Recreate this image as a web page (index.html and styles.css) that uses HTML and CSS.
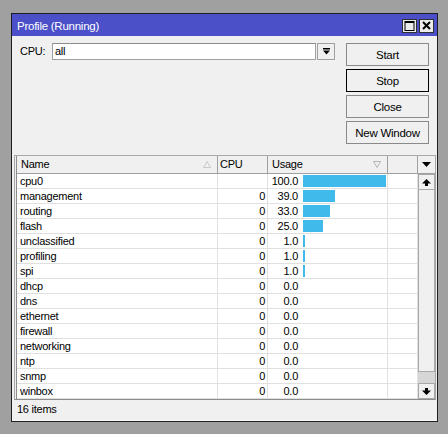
FILE: index.html
```html
<!DOCTYPE html>
<html>
<head>
<meta charset="utf-8">
<link rel="stylesheet" href="styles.css">
</head>
<body>
<div class="window">
  <div class="titlebar">
    <span class="title">Profile (Running)</span>
    <div class="tbtns">
      <span class="tbtn"><svg width="13" height="12" viewBox="0 0 13 12"><rect x="2" y="1.5" width="9" height="9" fill="none" stroke="#000" stroke-width="1"/><rect x="2" y="1" width="9" height="2" fill="#000"/></svg></span>
      <span class="tbtn"><svg width="13" height="12" viewBox="0 0 13 12"><path d="M3 2 L10 9 M10 2 L3 9" stroke="#000" stroke-width="2"/></svg></span>
    </div>
  </div>
  <div class="content">
    <div class="top">
      <div class="cpu">
        <span class="lbl">CPU:</span>
        <div class="input">all</div>
        <div class="dd"><svg width="9" height="9" viewBox="0 0 9 9"><rect x="1" y="1" width="7" height="1.5" fill="#000"/><polygon points="1,3.5 8,3.5 4.5,7.5" fill="#000"/></svg></div>
      </div>
      <div class="btns">
        <div class="btn">Start</div>
        <div class="btn def">Stop</div>
        <div class="btn">Close</div>
        <div class="btn">New Window</div>
      </div>
    </div>
    <div class="grid">
      <div class="inner">
        <div class="main">
          <div class="row hdr">
            <div class="c name">Name<svg class="sort" width="8" height="7" viewBox="0 0 8 7"><polygon points="4,0.5 7.5,6.5 0.5,6.5" fill="none" stroke="#c8c8c8"/></svg></div>
            <div class="c cpuc">CPU</div>
            <div class="c usage">Usage<svg class="sort" width="8" height="7" viewBox="0 0 8 7"><polygon points="0.5,0.5 7.5,0.5 4,6.5" fill="none" stroke="#b4b4b4"/></svg></div>
            <div class="c blank"></div>
          </div>
          <div class="row"><div class="c name">cpu0</div><div class="c cpuc num"></div><div class="c usage"><span class="val">100.0</span><span class="bar" style="width:83px"></span></div><div class="c blank"></div></div>
          <div class="row"><div class="c name">management</div><div class="c cpuc num">0</div><div class="c usage"><span class="val">39.0</span><span class="bar" style="width:32px"></span></div><div class="c blank"></div></div>
          <div class="row"><div class="c name">routing</div><div class="c cpuc num">0</div><div class="c usage"><span class="val">33.0</span><span class="bar" style="width:27px"></span></div><div class="c blank"></div></div>
          <div class="row"><div class="c name">flash</div><div class="c cpuc num">0</div><div class="c usage"><span class="val">25.0</span><span class="bar" style="width:20px"></span></div><div class="c blank"></div></div>
          <div class="row"><div class="c name">unclassified</div><div class="c cpuc num">0</div><div class="c usage"><span class="val">1.0</span><span class="bar" style="width:2px"></span></div><div class="c blank"></div></div>
          <div class="row"><div class="c name">profiling</div><div class="c cpuc num">0</div><div class="c usage"><span class="val">1.0</span><span class="bar" style="width:2px"></span></div><div class="c blank"></div></div>
          <div class="row"><div class="c name">spi</div><div class="c cpuc num">0</div><div class="c usage"><span class="val">1.0</span><span class="bar" style="width:2px"></span></div><div class="c blank"></div></div>
          <div class="row"><div class="c name">dhcp</div><div class="c cpuc num">0</div><div class="c usage"><span class="val">0.0</span></div><div class="c blank"></div></div>
          <div class="row"><div class="c name">dns</div><div class="c cpuc num">0</div><div class="c usage"><span class="val">0.0</span></div><div class="c blank"></div></div>
          <div class="row"><div class="c name">ethernet</div><div class="c cpuc num">0</div><div class="c usage"><span class="val">0.0</span></div><div class="c blank"></div></div>
          <div class="row"><div class="c name">firewall</div><div class="c cpuc num">0</div><div class="c usage"><span class="val">0.0</span></div><div class="c blank"></div></div>
          <div class="row"><div class="c name">networking</div><div class="c cpuc num">0</div><div class="c usage"><span class="val">0.0</span></div><div class="c blank"></div></div>
          <div class="row"><div class="c name">ntp</div><div class="c cpuc num">0</div><div class="c usage"><span class="val">0.0</span></div><div class="c blank"></div></div>
          <div class="row"><div class="c name">snmp</div><div class="c cpuc num">0</div><div class="c usage"><span class="val">0.0</span></div><div class="c blank"></div></div>
          <div class="row"><div class="c name">winbox</div><div class="c cpuc num">0</div><div class="c usage"><span class="val">0.0</span></div><div class="c blank"></div></div>
        </div>
        <div class="vscroll">
          <div class="menu"><svg width="9" height="5" viewBox="0 0 9 5"><polygon points="0,0 9,0 4.5,5" fill="#000"/></svg></div>
          <div class="sbtn up"><svg width="9" height="7" viewBox="0 0 9 7"><polygon points="4.5,0 9,4.5 0,4.5" fill="#000"/><rect x="3" y="4" width="3" height="3" fill="#000"/></svg></div>
          <div class="thumb"></div>
          <div class="track"></div>
          <div class="sbtn down"><svg width="9" height="7" viewBox="0 0 9 7"><rect x="3" y="0" width="3" height="3" fill="#000"/><polygon points="0,2.5 9,2.5 4.5,7" fill="#000"/></svg></div>
        </div>
      </div>
    </div>
    <div class="status">16 items</div>
  </div>
</div>
</body>
</html>
```
FILE: styles.css
```css
html, body {
  margin: 0;
  padding: 0;
}
body {
  background: #a0a0a0;
  width: 448px;
  height: 434px;
  overflow: hidden;
  font-family: "Liberation Sans", Arial, sans-serif;
  font-size: 11px;
  letter-spacing: -0.25px;
  color: #000;
}
.window {
  box-sizing: border-box;
  margin: 13px 0 0 11px;
  width: 427px;
  height: 409px;
  border: 1px solid #1e1e1e;
  background: #f0f0f0;
  display: flex;
  flex-direction: column;
}
.titlebar {
  height: 22px;
  background: #4b50c8;
  color: #fff;
  display: flex;
  align-items: center;
  justify-content: space-between;
  padding: 0 3px 0 5px;
  font-size: 11.5px;
}
.title {
  line-height: 22px;
  padding-top: 1px;
}
.tbtns {
  display: flex;
  gap: 2px;
  padding-top: 1px;
}
.tbtn {
  box-sizing: border-box;
  width: 15px;
  height: 14px;
  background: #ececec;
  border: 1px solid #303030;
  display: flex;
  align-items: center;
  justify-content: center;
}
.tbtn svg { display: block; }
.content {
  flex: 1;
  display: flex;
  flex-direction: column;
  padding-top: 7px;
}
.top {
  display: flex;
  padding: 0 8px;
  height: 101px;
}
.cpu {
  display: flex;
  align-items: flex-start;
  flex: 1;
}
.lbl {
  width: 32px;
  line-height: 17px;
  padding-left: 0;
}
.input {
  box-sizing: border-box;
  width: 264px;
  height: 17px;
  background: #fff;
  border: 1px solid #a0a0a0;
  border-top-color: #8c8c8c;
  padding-left: 2px;
  line-height: 15px;
}
.dd {
  box-sizing: border-box;
  width: 18px;
  height: 17px;
  margin-left: 1px;
  border: 1px solid #a0a0a0;
  background: #f0f0f0;
  display: flex;
  align-items: center;
  justify-content: center;
}
.dd svg { display: block; }
.btns {
  width: 83px;
  display: flex;
  flex-direction: column;
  gap: 3px;
}
.btn {
  box-sizing: border-box;
  height: 23px;
  border: 1px solid #8a8a8a;
  background: #f0f0f0;
  display: flex;
  align-items: center;
  justify-content: center;
  font-size: 11.5px;
}
.btn.def {
  border-color: #000;
}
.grid {
  box-sizing: border-box;
  margin: 11px 0 0 2px;
  width: 422px;
  border: 1px solid #a8a8a8;
  border-bottom-color: #8c8c8c;
  padding-left: 1px;
  background: #f0f0f0;
}
.inner {
  display: flex;
  border-left: 1px solid #8c8c8c;
}
.main {
  width: 401px;
  background: #fff;
}
.row {
  display: grid;
  grid-template-columns: 201px 50px 120px 30px;
  height: 15px;
}
.row.hdr {
  height: 18px;
  background: #f0f0f0;
}
.c {
  box-sizing: border-box;
  border-right: 1px solid #e0e0e0;
  border-bottom: 1px solid #e0e0e0;
  line-height: 14px;
  padding-left: 3px;
  white-space: nowrap;
  overflow: hidden;
  position: relative;
}
.hdr .c {
  border-right-color: #a0a0a0;
  border-bottom-color: #a0a0a0;
  line-height: 17px;
  padding-left: 4px;
}
.hdr .cpuc { padding-left: 2px; }
.sort {
  position: absolute;
  right: 6px;
  top: 5px;
}
.num {
  text-align: right;
  padding-right: 2px;
}
.usage {
  display: flex;
  align-items: center;
  padding-left: 0;
}
.hdr .usage { display: block; padding-left: 4px; }
.val {
  width: 30px;
  text-align: right;
  flex: none;
}
.bar {
  display: block;
  height: 12px;
  margin-left: 5px;
  background: #3fbaeb;
  flex: none;
}
.vscroll {
  box-sizing: border-box;
  width: 17px;
  display: flex;
  flex-direction: column;
  background: #f0f0f0;
}
.menu {
  box-sizing: border-box;
  height: 18px;
  border-bottom: 1px solid #a0a0a0;
  display: flex;
  align-items: center;
  justify-content: center;
}
.menu svg, .sbtn svg { display: block; }
.sbtn {
  box-sizing: border-box;
  height: 16px;
  border: 1px solid #a8a8a8;
  background: #f0f0f0;
  display: flex;
  align-items: center;
  justify-content: center;
}
.thumb {
  box-sizing: border-box;
  height: 182px;
  border: 1px solid #a8a8a8;
  border-top: none;
  background: #f0f0f0;
}
.track {
  height: 11px;
  background: #d6d6d6;
}
.status {
  height: 21px;
  line-height: 19px;
  padding-left: 5px;
  border-bottom: 1px solid #fafafa;
  box-sizing: border-box;
}
```
